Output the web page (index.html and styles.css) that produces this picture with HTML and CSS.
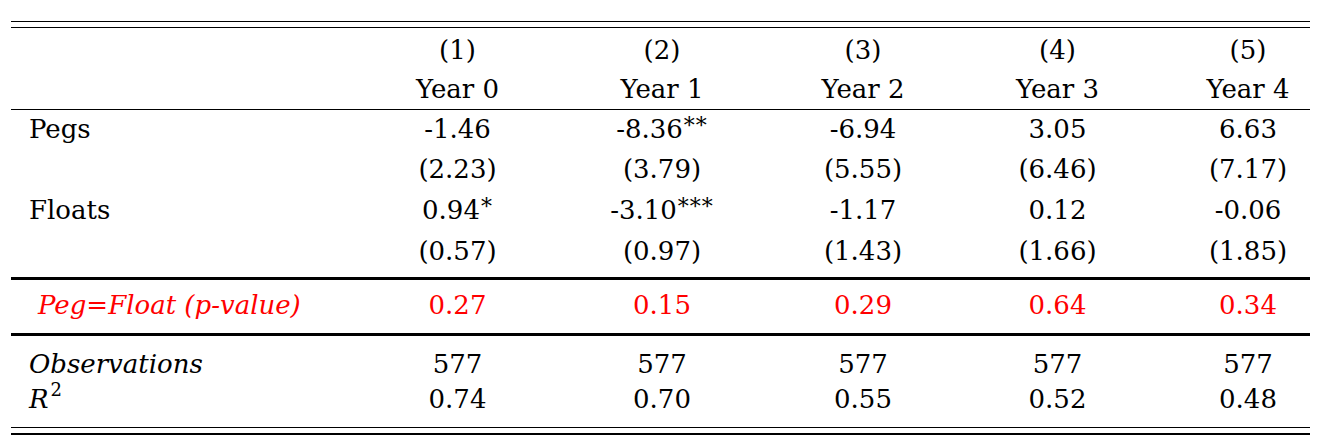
FILE: index.html
```html
<!DOCTYPE html>
<html>
<head>
<meta charset="utf-8">
<link rel="stylesheet" href="styles.css">
</head>
<body>
<div class="tbl">
  <div class="sec head">
    <div class="lab"></div>
    <div class="num">(1)</div>
    <div class="num">(2)</div>
    <div class="num">(3)</div>
    <div class="num">(4)</div>
    <div class="num">(5)</div>
    <div class="lab"></div>
    <div class="num">Year 0</div>
    <div class="num">Year 1</div>
    <div class="num">Year 2</div>
    <div class="num">Year 3</div>
    <div class="num">Year 4</div>
  </div>
  <div class="sec body">
    <div class="lab">Pegs</div>
    <div class="num">-1.46</div>
    <div class="num">-8.36<sup class="stars">**</sup></div>
    <div class="num">-6.94</div>
    <div class="num">3.05</div>
    <div class="num">6.63</div>
    <div class="lab"></div>
    <div class="num">(2.23)</div>
    <div class="num">(3.79)</div>
    <div class="num">(5.55)</div>
    <div class="num">(6.46)</div>
    <div class="num">(7.17)</div>
    <div class="lab">Floats</div>
    <div class="num">0.94<sup class="stars">*</sup></div>
    <div class="num">-3.10<sup class="stars">***</sup></div>
    <div class="num">-1.17</div>
    <div class="num">0.12</div>
    <div class="num">-0.06</div>
    <div class="lab"></div>
    <div class="num">(0.57)</div>
    <div class="num">(0.97)</div>
    <div class="num">(1.43)</div>
    <div class="num">(1.66)</div>
    <div class="num">(1.85)</div>
  </div>
  <div class="sec test">
    <div class="lab test-lab">Peg=Float (p-value)</div>
    <div class="num">0.27</div>
    <div class="num">0.15</div>
    <div class="num">0.29</div>
    <div class="num">0.64</div>
    <div class="num">0.34</div>
  </div>
  <div class="sec stats">
    <div class="lab ital">Observations</div>
    <div class="num">577</div>
    <div class="num">577</div>
    <div class="num">577</div>
    <div class="num">577</div>
    <div class="num">577</div>
    <div class="lab"><span class="ital">R</span><sup class="sq">2</sup></div>
    <div class="num">0.74</div>
    <div class="num">0.70</div>
    <div class="num">0.55</div>
    <div class="num">0.52</div>
    <div class="num">0.48</div>
  </div>
</div>
</body>
</html>
```
FILE: styles.css
```css
html, body {
  margin: 0;
  background: #ffffff;
}
body {
  font-family: "DejaVu Serif", "Liberation Serif", serif;
  font-size: 26px;
  color: #000000;
}
.tbl {
  margin: 21px 0 0 11px;
  width: 1299px;
  border-top: 1px solid #000;
  border-bottom: 2px solid #000;
  padding: 5px 0;
}
.sec {
  display: grid;
  grid-template-columns: 344px 205px 204px 198px 191px 157px;
  align-items: center;
}
.sec > .num:nth-child(6n) {
  padding-left: 33px;
}
.head {
  border-top: 1px solid #000;
  border-bottom: 1px solid #000;
  grid-template-rows: 44px 33px;
  padding-bottom: 4px;
}
.body {
  grid-template-rows: 38px 41px 41px 41px;
  padding-bottom: 6px;
  border-bottom: 3px solid #000;
}
.test {
  grid-template-rows: 50px;
  padding-bottom: 3px;
  border-bottom: 3px solid #000;
  color: #ff0000;
}
.stats {
  grid-template-rows: 35px 35px;
  padding-top: 10px;
  padding-bottom: 11px;
  border-bottom: 1px solid #000;
}
.lab {
  padding-left: 18px;
  text-align: left;
  white-space: nowrap;
}
.test-lab {
  padding-left: 27px;
  font-style: italic;
}
.ital {
  font-style: italic;
}
.num {
  text-align: center;
  white-space: nowrap;
}
.stars {
  font-size: 22px;
  line-height: 0;
  vertical-align: 5px;
  letter-spacing: 1px;
  margin-left: 1px;
}
.sq {
  font-size: 18px;
  line-height: 0;
  vertical-align: 12px;
  margin-left: 2px;
}
```
